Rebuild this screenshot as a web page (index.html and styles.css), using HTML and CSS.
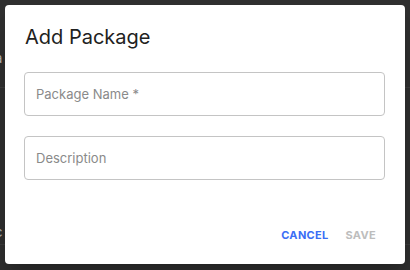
FILE: index.html
```html
<!DOCTYPE html>
<html lang="en">
<head>
    <meta charset="UTF-8">
    <meta name="viewport" content="width=device-width, initial-scale=1.0">
    <title>Add Package</title>
    <link rel="stylesheet" href="styles.css">
</head>
<body>
    <div class="fundo">
        <div class="linha linha-1"><span class="letra">a</span></div>
        <div class="linha linha-2"><span class="letra">c</span></div>
    </div>

    <div class="dialogo">
        <h2 class="titulo">Add Package</h2>
        <div class="campos">
            <div class="campo">
                <input type="text" placeholder="Package Name *">
            </div>
            <div class="campo">
                <input type="text" placeholder="Description">
            </div>
        </div>
        <div class="acoes">
            <button class="botao botao-cancelar">Cancel</button>
            <button class="botao botao-salvar" disabled>Save</button>
        </div>
    </div>
</body>
</html>
```

FILE: styles.css
```css
body {
    margin: 0;
    background: #303030;
    font-family: 'Inter', 'Noto Sans', sans-serif;
    height: 270px;
    overflow: hidden;
    position: relative;
}

/* tabela escura atras do modal */
.fundo {
    position: absolute;
    inset: 0;
}

.linha {
    position: absolute;
    left: 0;
    right: 0;
    border-bottom: 1px solid #3c3c3c;
    color: #bbbbbb;
    font-size: 13px;
}

.linha-1 {
    top: 50px;
    height: 37px;
}

.linha-2 {
    top: 224px;
    height: 20px;
}

.letra {
    position: absolute;
    left: -5px;
    top: 0;
}

.dialogo {
    position: absolute;
    top: 5px;
    left: 5px;
    width: 400px;
    height: 259px;
    background: #ffffff;
    border-radius: 4px;
    box-shadow: 0 11px 15px -7px rgba(0, 0, 0, 0.2), 0 24px 38px 3px rgba(0, 0, 0, 0.14);
    display: flex;
    flex-direction: column;
}

.titulo {
    margin: 0;
    padding: 16px 20px 0 20px;
    font-size: 20px;
    line-height: 32px;
    font-weight: 400;
    color: #212121;
}

.campos {
    display: flex;
    flex-direction: column;
    gap: 20px;
    margin-top: 19px;
    padding: 0 20px 0 19px;
}

.campo input {
    display: block;
    box-sizing: border-box;
    width: 100%;
    height: 44px;
    padding: 0 11px;
    border: 1px solid #c4c4c4;
    border-radius: 4px;
    font-family: inherit;
    font-size: 13px;
    color: #212121;
    outline: none;
}

.campo input::placeholder {
    color: #8a8a8a;
}

.acoes {
    margin-top: auto;
    display: flex;
    justify-content: flex-end;
    padding: 0 20px 11px 0;
}

.botao {
    background: none;
    border: none;
    height: 36px;
    padding: 0 9px;
    font-family: inherit;
    font-size: 11px;
    font-weight: 700;
    letter-spacing: 0.3px;
    text-transform: uppercase;
    cursor: pointer;
}

.botao-cancelar {
    color: #3b6ef5;
    margin-right: -1px;
}

.botao-salvar {
    color: #bdbdbd;
    cursor: default;
}
```
